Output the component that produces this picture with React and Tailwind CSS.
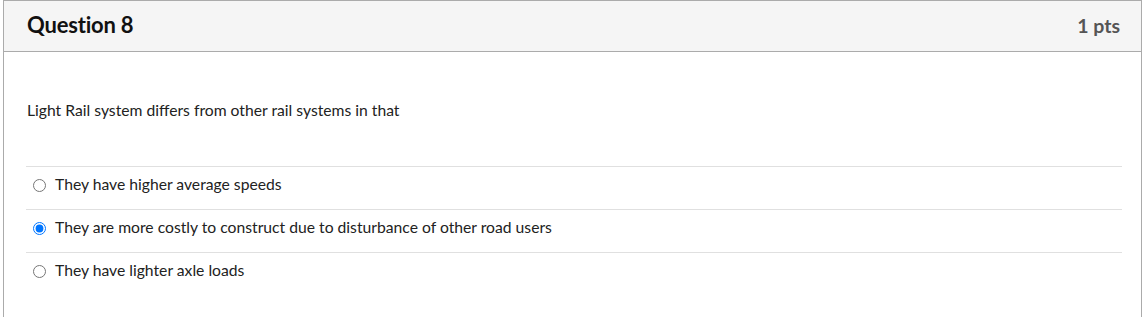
const answers = [
  { id: 1, text: 'They have higher average speeds', checked: false },
  { id: 2, text: 'They are more costly to construct due to disturbance of other road users', checked: true },
  { id: 3, text: 'They have lighter axle loads', checked: false },
]

const App = () => {
  return (
    <div className="bg-white w-[1142px] h-[317px] overflow-hidden" style={{ fontFamily: 'Lato, "Open Sans", sans-serif' }}>
      <div className="ml-[3px] w-[1139px] h-[330px] border border-[#ababab]">
        {/* Header */}
        <div className="h-[51px] bg-[#f5f5f5] border-b border-[#ababab] flex items-center justify-between pl-[23px] pr-[21px]">
          <h2 className="text-[22px] font-bold text-[#111] tracking-[-0.2px] -mt-[4px]">Question 8</h2>
          <span className="text-[19.5px] font-bold text-[#555] -mt-[1px]">1 pts</span>
        </div>

        {/* Body */}
        <div className="pl-[22px] pr-[19px]">
          <p className="pt-[47px] pb-[45px] text-[15.7px] leading-[22px] text-[#222] pl-[1px]">
            Light Rail system differs from other rail systems in that
          </p>
          <div>
            {answers.map(a => (
              <label
                key={a.id}
                className="flex items-center h-[43px] border-t border-[#e0e0e0] text-[15.7px] text-[#222] pb-[6px]"
              >
                <input
                  type="radio"
                  name="q8"
                  readOnly
                  checked={a.checked}
                  className="ml-[7px] mr-[9px] w-[13px] h-[13px]"
                />
                <span>{a.text}</span>
              </label>
            ))}
          </div>
        </div>
      </div>
    </div>
  )
}

export default App
